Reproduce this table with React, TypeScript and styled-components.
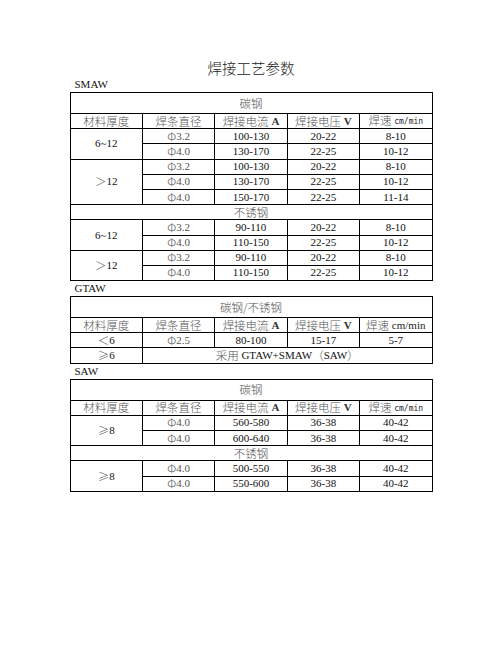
import React from 'react';
import styled, { createGlobalStyle } from 'styled-components';

const GlobalStyle = createGlobalStyle`
  body {
    margin: 0;
    background: #ffffff;
    font-family: 'Liberation Serif', 'Noto Sans CJK SC', serif;
    color: #111;
  }
`;

const Page = styled.main`
  width: 502px;
  padding-top: 59px;
  display: flex;
  flex-direction: column;
  align-items: center;
`;

const Title = styled.h1`
  margin: 0;
  font-family: 'Noto Sans CJK SC', sans-serif;
  font-weight: 300;
  font-size: 14.5px;
  line-height: 18px;
  color: #222;
`;

const Section = styled.section`
  width: 363px;
`;

const SectionLabel = styled.div`
  height: 15px;
  line-height: 15px;
  padding-left: 5px;
  font-size: 11px;
  color: #111;
`;

const Table = styled.table`
  width: 363px;
  border-collapse: collapse;
  table-layout: fixed;
  border: 1px solid #000;
`;

const Row = styled.tr<{ $group?: boolean }>`
  height: ${(p) => (p.$group ? '21px' : '15.2px')};
`;

const Cell = styled.td<{ $muted?: boolean }>`
  border: 1px solid #000;
  padding: 0;
  text-align: center;
  vertical-align: middle;
  font-size: 11px;
  line-height: 11px;
  white-space: nowrap;
  color: ${(p) => (p.$muted ? '#555' : '#111')};
  font-family: 'Liberation Serif', serif;
`;

const Han = styled.span`
  font-family: 'Noto Sans CJK SC', sans-serif;
  font-weight: 300;
  font-size: 11.5px;
  line-height: 11px;
  vertical-align: top;
  color: #555;
`;

const Strong = styled.span`
  font-weight: 700;
  color: #333;
`;

const Unit = styled.span<{ $small?: boolean }>`
  font-family: ${(p) => (p.$small ? "'DejaVu Sans Mono', monospace" : "'Liberation Serif', serif")};
  font-size: ${(p) => (p.$small ? '8px' : '11px')};
  color: #222;
`;

const Muted = styled.span`
  color: #555;
`;

type Data = { dia: string; amp: string; volt: string; speed: string };
type Group = { thick: React.ReactNode; rows: Data[] };
type Block = { material: string; groups: Group[] };

const Cols = () => (
  <colgroup>
    {[0, 1, 2, 3, 4].map((i) => (
      <col key={i} style={{ width: '20%' }} />
    ))}
  </colgroup>
);

const Header = ({ smallUnit }: { smallUnit: boolean }) => (
  <Row>
    <Cell $muted><Han>材料厚度</Han></Cell>
    <Cell $muted><Han>焊条直径</Han></Cell>
    <Cell $muted><Han>焊接电流</Han> <Strong>A</Strong></Cell>
    <Cell $muted><Han>焊接电压</Han> <Strong>V</Strong></Cell>
    <Cell $muted>
      <Han>焊速</Han> <Unit $small={smallUnit}>cm/min</Unit>
    </Cell>
  </Row>
);

const Dia = ({ v }: { v: string }) => (
  <>
    <Han>Φ</Han>
    <Muted>{v}</Muted>
  </>
);

const MaterialRow = ({ name, group }: { name: string; group?: boolean }) => (
  <Row $group={group}>
    <Cell colSpan={5} $muted><Han>{name}</Han></Cell>
  </Row>
);

const GroupRows = ({ groups }: { groups: Group[] }) => (
  <>
    {groups.map((g, gi) =>
      g.rows.map((r, ri) => (
        <Row key={`${gi}-${ri}`}>
          {ri === 0 && <Cell rowSpan={g.rows.length}>{g.thick}</Cell>}
          <Cell><Dia v={r.dia} /></Cell>
          <Cell>{r.amp}</Cell>
          <Cell>{r.volt}</Cell>
          <Cell>{r.speed}</Cell>
        </Row>
      ))
    )}
  </>
);

const smaw: Block[] = [
  {
    material: '碳钢',
    groups: [
      {
        thick: '6~12',
        rows: [
          { dia: '3.2', amp: '100-130', volt: '20-22', speed: '8-10' },
          { dia: '4.0', amp: '130-170', volt: '22-25', speed: '10-12' },
        ],
      },
      {
        thick: <><Han>＞</Han>12</>,
        rows: [
          { dia: '3.2', amp: '100-130', volt: '20-22', speed: '8-10' },
          { dia: '4.0', amp: '130-170', volt: '22-25', speed: '10-12' },
          { dia: '4.0', amp: '150-170', volt: '22-25', speed: '11-14' },
        ],
      },
    ],
  },
  {
    material: '不锈钢',
    groups: [
      {
        thick: '6~12',
        rows: [
          { dia: '3.2', amp: '90-110', volt: '20-22', speed: '8-10' },
          { dia: '4.0', amp: '110-150', volt: '22-25', speed: '10-12' },
        ],
      },
      {
        thick: <><Han>＞</Han>12</>,
        rows: [
          { dia: '3.2', amp: '90-110', volt: '20-22', speed: '8-10' },
          { dia: '4.0', amp: '110-150', volt: '22-25', speed: '10-12' },
        ],
      },
    ],
  },
];

const saw: Block[] = [
  {
    material: '碳钢',
    groups: [
      {
        thick: <><Han>≥</Han>8</>,
        rows: [
          { dia: '4.0', amp: '560-580', volt: '36-38', speed: '40-42' },
          { dia: '4.0', amp: '600-640', volt: '36-38', speed: '40-42' },
        ],
      },
    ],
  },
  {
    material: '不锈钢',
    groups: [
      {
        thick: <><Han>≥</Han>8</>,
        rows: [
          { dia: '4.0', amp: '500-550', volt: '36-38', speed: '40-42' },
          { dia: '4.0', amp: '550-600', volt: '36-38', speed: '40-42' },
        ],
      },
    ],
  },
];

const ParamTable = ({ blocks }: { blocks: Block[] }) => (
  <Table>
    <Cols />
    <tbody>
      {blocks.map((b, i) => (
        <React.Fragment key={i}>
          <MaterialRow name={b.material} group={i === 0} />
          {i === 0 && <Header smallUnit />}
          <GroupRows groups={b.groups} />
        </React.Fragment>
      ))}
    </tbody>
  </Table>
);

export default function App() {
  return (
    <>
      <GlobalStyle />
      <Page>
        <Title>焊接工艺参数</Title>
        <Section>
          <SectionLabel>SMAW</SectionLabel>
          <ParamTable blocks={smaw} />
        </Section>
        <Section>
          <SectionLabel>GTAW</SectionLabel>
          <Table>
            <Cols />
            <tbody>
              <MaterialRow name="碳钢/不锈钢" group />
              <Header smallUnit={false} />
              <Row>
                <Cell><Han>＜</Han>6</Cell>
                <Cell><Dia v="2.5" /></Cell>
                <Cell>80-100</Cell>
                <Cell>15-17</Cell>
                <Cell>5-7</Cell>
              </Row>
              <Row>
                <Cell><Han>≥</Han>6</Cell>
                <Cell colSpan={4}>
                  <Han>采用</Han> GTAW+SMAW<Han>（</Han>SAW<Han>）</Han>
                </Cell>
              </Row>
            </tbody>
          </Table>
        </Section>
        <Section>
          <SectionLabel>SAW</SectionLabel>
          <ParamTable blocks={saw} />
        </Section>
      </Page>
    </>
  );
}
